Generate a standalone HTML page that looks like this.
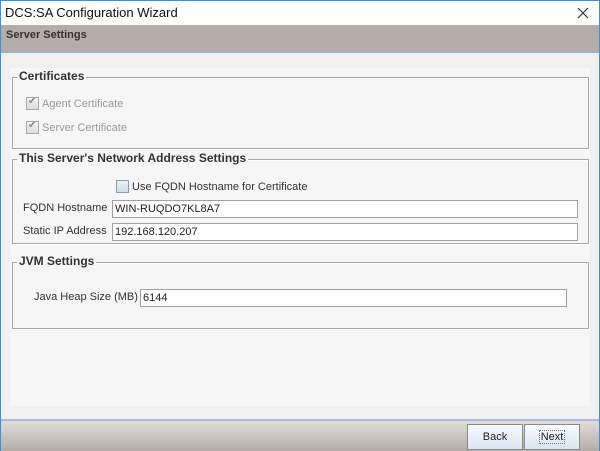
<!DOCTYPE html>
<html><head><style>
body{margin:0;width:600px;height:451px;overflow:hidden;font-family:"Liberation Sans",Arial,sans-serif;background:#f0f0f0;position:relative}
.a{position:absolute}
.grp{position:absolute;left:12px;width:575px;border:1px solid #a8a8a8;box-shadow:inset 1px 1px 0 #fff,1px 1px 0 #fff}
.gt{position:absolute;left:4px;top:-9px;background:#f6f6f6;padding:0 2px;font-weight:bold;font-size:12px;color:#333}
.lbl{position:absolute;font-size:11px;color:#333}
.inp{position:absolute;height:16px;border:1px solid #a0a0a0;background:#fff;font-size:11px;line-height:16px;padding-left:2px;color:#222}
.cb{position:absolute;width:11px;height:11px;border:1px solid #a8a8a8;background:linear-gradient(#f4f4f4,#dcdcdc)}
.btn{position:absolute;top:424px;height:24px;border:1px solid #8a8a8a;background:linear-gradient(#f8fbfe,#d8e6f2);font-size:11px;text-align:center;line-height:24px;color:#222}
</style></head><body>
<div class="a" style="left:0;top:0;width:600px;height:451px;box-sizing:border-box;border:1px solid #3b8fdc;border-bottom:none"></div>
<div class="a" style="left:1px;top:1px;width:598px;height:24px;background:#fff"></div>
<div class="a" style="left:5px;top:5px;font-size:13px;color:#111;font-family:'Liberation Sans',sans-serif">DCS:SA Configuration Wizard</div>
<svg class="a" style="left:577px;top:7px" width="12" height="12"><path d="M1 1L11 11M11 1L1 11" stroke="#333" stroke-width="1.2"/></svg>
<div class="a" style="left:1px;top:25px;width:598px;height:27px;background:#b5ada9;border-bottom:1px solid #8fb0e0"></div>
<div class="a" style="left:6px;top:29px;font-size:11px;font-weight:bold;color:#333">Server Settings</div>
<div class="a" style="left:10px;top:68px;width:580px;height:338px;background:#f6f6f6"></div>

<div class="grp" style="top:77px;height:70px"><div class="gt">Certificates</div></div>
<div class="cb" style="left:26px;top:97px"></div><div class="a" style="left:28px;top:96px;font-size:10px;color:#888">✔</div>
<div class="lbl" style="left:42px;top:98px;color:#999">Agent Certificate</div>
<div class="cb" style="left:26px;top:121px"></div><div class="a" style="left:28px;top:120px;font-size:10px;color:#888">✔</div>
<div class="lbl" style="left:42px;top:122px;color:#999">Server Certificate</div>

<div class="grp" style="top:159px;height:83px"><div class="gt">This Server's Network Address Settings</div></div>
<div class="cb" style="left:116px;top:180px;background:linear-gradient(#eef2f8,#d2dbe8);border-color:#8a9ab0"></div>
<div class="lbl" style="left:132px;top:181px">Use FQDN Hostname for Certificate</div>
<div class="lbl" style="left:23px;top:202px">FQDN Hostname</div>
<div class="inp" style="left:112px;top:200px;width:462px">WIN-RUQDO7KL8A7</div>
<div class="lbl" style="left:23px;top:225px">Static IP Address</div>
<div class="inp" style="left:112px;top:223px;width:462px">192.168.120.207</div>

<div class="grp" style="top:262px;height:65px"><div class="gt">JVM Settings</div></div>
<div class="lbl" style="left:34px;top:291px">Java Heap Size (MB)</div>
<div class="inp" style="left:140px;top:289px;width:423px">6144</div>

<div class="a" style="left:1px;top:419px;width:598px;height:2px;background:#a9b9d9"></div>
<div class="a" style="left:1px;top:421px;width:598px;height:30px;background:linear-gradient(#e0ddd9,#b3aca6)"></div>
<div class="btn" style="left:467px;width:54px">Back</div>
<div class="btn" style="left:524px;width:54px"><span style="border:1px dotted #777;padding:0 1px">Next</span></div>
</body></html>
